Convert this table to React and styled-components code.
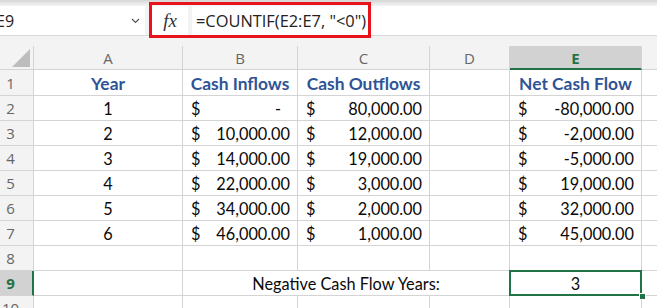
import React from "react";
import styled, { createGlobalStyle } from "styled-components";

const GlobalStyle = createGlobalStyle`
  html, body { margin: 0; padding: 0; background: #ffffff; overflow: hidden; }
  body { width: 657px; height: 308px; }
  * { box-sizing: border-box; }
`;

const GRID = "#d4d4d4";
const GREEN = "#217346";
const HEAD_BG = "#f3f3f3";
const SEL_BG = "#d2d2d2";

const Page = styled.div`
  width: 657px;
  height: 308px;
  overflow: hidden;
  position: relative;
  background: #fff;
`;

const FormulaArea = styled.div`
  height: 46px;
  background: linear-gradient(#d4d4d4 0px, #ececec 4px, ${HEAD_BG} 6px, ${HEAD_BG} 100%);
  padding-top: 6px;
`;

const FormulaRow = styled.div`
  display: flex;
  height: 30px;
  border-bottom: 1px solid #dadada;
`;

const NameBox = styled.div`
  width: 145px;
  background: #fff;
  display: flex;
  align-items: center;
  justify-content: space-between;
  padding: 0 5px 0 0;
  font-family: "Open Sans", sans-serif;
  font-size: 16px;
  color: #222;
  margin-right: 7px;
`;

const NameText = styled.span`
  margin-left: -4px;
`;

const FxBox = styled.div`
  width: 36px;
  background: #fff;
  display: flex;
  align-items: center;
  justify-content: center;
  font-family: "Liberation Serif", serif;
  font-style: italic;
  font-size: 19px;
  color: #333;
  margin-right: 4px;
`;

const FormulaInput = styled.div`
  flex: 1;
  background: #fff;
  display: flex;
  align-items: center;
  padding-left: 4px;
  font-family: "Open Sans", sans-serif;
  font-size: 16.4px;
  color: #222;
`;

const Highlight = styled.div`
  position: absolute;
  left: 149px;
  top: 2px;
  width: 222px;
  height: 36px;
  border: 3px solid #e8121d;
  pointer-events: none;
`;

const Sheet = styled.div`
  display: grid;
  grid-template-columns: 34px 149px 115px 132px 80px 132px 1fr;
  grid-template-rows: 24px 26px repeat(9, 25px);
`;

const Corner = styled.div`
  background: ${HEAD_BG};
  border-right: 1px solid ${GRID};
  border-bottom: 1px solid ${GRID};
  display: flex;
  align-items: flex-end;
  padding: 0 0 2px 12px;
`;

const ColHead = styled.div`
  background: ${(p) => (p.$active ? SEL_BG : HEAD_BG)};
  border-right: 1px solid ${GRID};
  border-bottom: ${(p) => (p.$active ? `2px solid ${GREEN}` : `1px solid ${GRID}`)};
  display: flex;
  align-items: center;
  justify-content: center;
  font-family: "Open Sans", sans-serif;
  font-size: 15px;
  font-weight: ${(p) => (p.$active ? 700 : 400)};
  color: ${(p) => (p.$active ? GREEN : "#666")};
  padding-top: ${(p) => (p.$active ? "1px" : "0")};
`;

const RowHead = styled.div`
  background: ${(p) => (p.$active ? SEL_BG : HEAD_BG)};
  border-right: ${(p) => (p.$active ? `2px solid ${GREEN}` : `1px solid ${GRID}`)};
  border-bottom: 1px solid ${GRID};
  display: flex;
  align-items: center;
  justify-content: center;
  padding-right: ${(p) => (p.$active ? "11px" : "12px")};
  font-family: "Open Sans", sans-serif;
  font-size: 15px;
  font-weight: ${(p) => (p.$active ? 700 : 400)};
  color: ${(p) => (p.$active ? GREEN : "#666")};
`;

const Cell = styled.div`
  border-right: 1px solid ${GRID};
  border-bottom: 1px solid ${GRID};
  grid-column: ${(p) => (p.$span ? `span ${p.$span}` : "auto")};
  display: flex;
  align-items: flex-end;
  justify-content: ${(p) => p.$align || "center"};
  padding: 0 8px 2px 8px;
  font-family: "Lato", sans-serif;
  font-size: 16.3px;
  color: #0a0a0a;
  white-space: nowrap;
  position: relative;
`;

const HeadCell = styled(Cell)`
  font-weight: 700;
  font-size: 17.4px;
  color: #2f5496;
  padding-bottom: 1px;
`;

const MoneyCell = styled(Cell)`
  justify-content: space-between;
  padding: 0 7px 2px 8px;
`;

const Dash = styled.span`
  padding-right: 9px;
`;

const SelectedCell = styled(Cell)`
  &::after {
    content: "";
    position: absolute;
    left: -1px;
    top: -1px;
    right: -1px;
    bottom: -1px;
    border: 2px solid ${GREEN};
    pointer-events: none;
  }
  &::before {
    content: "";
    position: absolute;
    right: -4px;
    bottom: -4px;
    width: 5px;
    height: 5px;
    background: ${GREEN};
    outline: 1px solid #fff;
    z-index: 2;
  }
`;

const Chevron = () => (
  <svg width="9" height="6" viewBox="0 0 9 6">
    <path d="M1 1 L4.5 4.5 L8 1" fill="none" stroke="#555" strokeWidth="1.2" />
  </svg>
);

const CornerMark = () => (
  <svg width="18" height="18" viewBox="0 0 18 18">
    <polygon points="0,18 18,0 18,18" fill="#bdbdbd" />
  </svg>
);

const data = [
  { year: 1, inflow: null, outflow: "80,000.00", net: "-80,000.00" },
  { year: 2, inflow: "10,000.00", outflow: "12,000.00", net: "-2,000.00" },
  { year: 3, inflow: "14,000.00", outflow: "19,000.00", net: "-5,000.00" },
  { year: 4, inflow: "22,000.00", outflow: "3,000.00", net: "19,000.00" },
  { year: 5, inflow: "34,000.00", outflow: "2,000.00", net: "32,000.00" },
  { year: 6, inflow: "46,000.00", outflow: "1,000.00", net: "45,000.00" },
];

const Money = ({ value }) => (
  <MoneyCell>
    <span>$</span>
    {value === null ? <Dash>-</Dash> : <span>{value}</span>}
  </MoneyCell>
);

export default function App() {
  return (
    <Page>
      <GlobalStyle />
      <FormulaArea>
        <FormulaRow>
          <NameBox>
            <NameText>E9</NameText>
            <Chevron />
          </NameBox>
          <FxBox>fx</FxBox>
          <FormulaInput>=COUNTIF(E2:E7, "&lt;0")</FormulaInput>
        </FormulaRow>
      </FormulaArea>
      <Highlight />
      <Sheet>
        <Corner>
          <CornerMark />
        </Corner>
        {["A", "B", "C", "D", "E"].map((c) => (
          <ColHead key={c} $active={c === "E"}>
            {c}
          </ColHead>
        ))}
        <ColHead />

        <RowHead>1</RowHead>
        <HeadCell>Year</HeadCell>
        <HeadCell>Cash Inflows</HeadCell>
        <HeadCell>Cash Outflows</HeadCell>
        <Cell />
        <HeadCell>Net Cash Flow</HeadCell>
        <Cell />

        {data.map((r, i) => (
          <React.Fragment key={r.year}>
            <RowHead>{i + 2}</RowHead>
            <Cell>{r.year}</Cell>
            <Money value={r.inflow} />
            <Money value={r.outflow} />
            <Cell />
            <Money value={r.net} />
            <Cell />
          </React.Fragment>
        ))}

        <RowHead>8</RowHead>
        <Cell />
        <Cell />
        <Cell />
        <Cell />
        <Cell />
        <Cell />

        <RowHead $active>9</RowHead>
        <Cell />
        <Cell $span={3}>Negative Cash Flow Years:</Cell>
        <SelectedCell>3</SelectedCell>
        <Cell />

        <RowHead>10</RowHead>
        <Cell />
        <Cell />
        <Cell />
        <Cell />
        <Cell />
        <Cell />
      </Sheet>
    </Page>
  );
}
